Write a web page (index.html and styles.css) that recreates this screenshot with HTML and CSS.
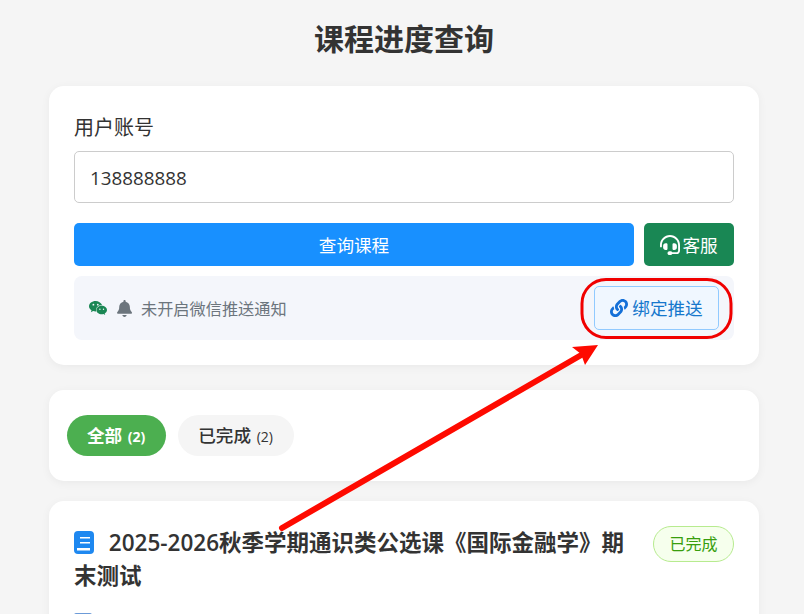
FILE: index.html
```html
<!DOCTYPE html>
<html lang="zh">
<head>
<meta charset="utf-8">
<title>课程进度查询</title>
<link rel="stylesheet" href="styles.css">
</head>
<body>
<main class="page">
  <h1 class="title">课程进度查询</h1>
  <section class="card form-card">
    <label class="label">用户账号</label>
    <div class="input">138888888</div>
    <div class="actions">
      <button class="btn primary">查询课程</button>
      <button class="btn service">
        <svg class="ico" viewBox="0 0 512 512"><path fill="currentColor" d="M256 48C141.100 48 48 141.100 48 256v40c0 13.300-10.700 24-24 24S0 309.300 0 296V256C0 114.600 114.600 0 256 0S512 114.600 512 256V400.100c0 48.600-39.400 88-88.100 88L313.600 488c-8.300 14.300-23.800 24-41.600 24H240c-26.500 0-48-21.500-48-48s21.500-48 48-48h32c17.800 0 33.300 9.700 41.600 24l110.400 .1c22.100 0 40-17.900 40-40V256c0-114.900-93.100-208-208-208zM144 208h16c17.700 0 32 14.300 32 32V352c0 17.700-14.300 32-32 32H144c-35.300 0-64-28.700-64-64V272c0-35.300 28.700-64 64-64zm224 0c35.300 0 64 28.700 64 64v48c0 35.300-28.700 64-64 64H352c-17.700 0-32-14.300-32-32V240c0-17.700 14.300-32 32-32h16z"/></svg>
        客服
      </button>
    </div>
    <div class="notice">
      <div class="notice-text">
        <svg class="wechat" viewBox="0 0 18 16"><path fill="#1a8754" d="M6.600 1C3 1 0 3.300 0 6.200c0 1.700 1 3.100 2.500 4.100L1.900 12.200l2.200-1.100c.8.200 1.600.3 2.500.3h.6c-.1-.4-.2-.9-.2-1.300 0-2.700 2.500-4.800 5.600-4.800h.6C12 2.900 9.500 1 6.600 1z"/><path fill="#1a8754" d="M18 10c0-2.400-2.400-4.300-5.300-4.300S7.400 7.600 7.400 10s2.400 4.300 5.300 4.300c.6 0 1.200-.1 1.800-.3l1.700 1-.5-1.600c1.400-.8 2.300-2 2.300-3.400z"/><circle cx="4.400" cy="4.700" r=".9" fill="#f4f6fb"/><circle cx="8.800" cy="4.700" r=".9" fill="#f4f6fb"/><circle cx="10.900" cy="9.200" r=".7" fill="#f4f6fb"/><circle cx="14.500" cy="9.200" r=".7" fill="#f4f6fb"/></svg>
        <svg class="bell" viewBox="0 0 448 512"><path fill="#6c757d" d="M224 0c-18 0-32 14-32 32v19C119 66 64 131 64 208v19c0 47-17 92-48 127l-7 8c-8 9-10 23-5 34s16 18 29 18h384c13 0 24-7 29-18s3-25-5-34l-7-8c-31-35-48-80-48-127v-19c0-77-55-142-128-157V32c0-18-14-32-32-32zm45 493c12-12 19-28 19-45H160c0 17 7 33 19 45s28 19 45 19 33-7 45-19z"/></svg>
        <span>未开启微信推送通知</span>
      </div>
      <button class="bind">
        <svg class="ico" viewBox="0 0 512 512"><path fill="#1470d8" d="M326.612 185.391c59.747 59.809 58.927 155.698.36 214.590-.11.12-.24.25-.36.37l-67.200 67.200c-59.270 59.270-155.699 59.262-214.960 0-59.270-59.260-59.270-155.700 0-214.960l37.106-37.106c9.840-9.840 26.786-3.300 27.294 10.606.648 17.722 3.826 35.527 9.690 52.721 1.986 5.822.567 12.262-3.783 16.612l-13.087 13.087c-28.026 28.026-28.905 73.660-1.155 101.960 28.024 28.579 74.086 28.749 102.325.51l67.200-67.190c28.191-28.191 28.073-73.757 0-101.830-3.701-3.694-7.429-6.564-10.341-8.569a16.037 16.037 0 0 1-6.947-12.606c-.396-10.567 3.348-21.456 11.698-29.806l21.054-21.055c5.521-5.521 14.182-6.199 20.584-1.731a152.482 152.482 0 0 1 20.522 17.197zM467.547 44.449c-59.261-59.262-155.690-59.270-214.960 0l-67.200 67.200c-.12.120-.25.250-.36.370-58.566 58.892-59.387 154.781.36 214.590a152.454 152.454 0 0 0 20.521 17.196c6.402 4.468 15.064 3.789 20.584-1.731l21.054-21.055c8.350-8.350 12.094-19.239 11.698-29.806a16.037 16.037 0 0 0-6.947-12.606c-2.912-2.005-6.640-4.875-10.341-8.569-28.073-28.073-28.191-73.639 0-101.830l67.200-67.190c28.239-28.239 74.300-28.069 102.325.51 27.750 28.300 26.872 73.934-1.155 101.960l-13.087 13.087c-4.350 4.350-5.769 10.790-3.783 16.612 5.864 17.194 9.042 34.999 9.690 52.721.509 13.906 17.454 20.446 27.294 10.606l37.106-37.106c59.271-59.259 59.271-155.699.001-214.959z"/></svg>
        绑定推送
      </button>
    </div>
  </section>
  <section class="card tabs">
    <button class="tab active">全部 <small>(2)</small></button>
    <button class="tab">已完成 <small>(2)</small></button>
  </section>
  <section class="card course">
    <div class="course-head">
      <h2 class="course-title">
        <svg class="book" viewBox="0 0 20 23"><rect width="20" height="23" rx="4" fill="#1e88f0"/><rect x="6" y="6" width="10" height="1.500" fill="#fff"/><rect x="6" y="11" width="10" height="1.500" fill="#fff"/><rect x="3" y="17" width="13" height="2.500" fill="#fff"/></svg>
        2025-2026秋季学期通识类公选课《国际金融学》期末测试
      </h2>
      <span class="status">已完成</span>
    </div>
    <div class="meta">
      <svg class="meta-ico" viewBox="0 0 16 16"><rect width="16" height="16" rx="2" fill="#6c9bd8"/></svg>
    </div>
  </section>
</main>
<svg class="annotation" viewBox="0 0 804 614" width="804" height="614" aria-hidden="true">
  <rect x="582" y="279.500" width="149" height="58" rx="24" fill="none" stroke="#f00000" stroke-width="3"/>
  <line x1="282" y1="528" x2="583" y2="354" stroke="#fe0a00" stroke-width="6" stroke-linecap="round"/>
  <polygon points="598,345 572,347 581,354 585,365" fill="#fe0a00"/>
</svg>
</body>
</html>
```
FILE: styles.css
```css
* { box-sizing: border-box; }
html, body { margin: 0; height: 100%; overflow: hidden; }
body {
  background: #f5f5f5;
  color: #333;
  font-family: "Open Sans", "Noto Sans CJK SC", sans-serif;
  position: relative;
}
.page { width: 710px; margin-left: 49px; padding-top: 17px; }
.title { margin: 0 0 23px; height: 46px; line-height: 44px; text-align: center; font-size: 30px; font-weight: 700; color: #333; }
.card { background: #fff; border-radius: 15px; box-shadow: 0 2px 10px rgba(0,0,0,.05); }
.form-card { padding: 25px; height: 279px; margin-bottom: 25px; }
.label { display: block; font-size: 20px; line-height: 30px; padding-top: 2px; margin-bottom: 8px; color: #333; }
.input { height: 52px; border: 1px solid #ccc; border-radius: 5px; padding: 1px 15px 0; line-height: 51px; font-size: 18.800px; color: #333; background: #fff; }
.actions { display: flex; gap: 10px; margin-top: 20px; }
.btn { border: 0; height: 43px; border-radius: 5px; color: #fff; font: inherit; font-size: 17.600px; display: flex; align-items: center; justify-content: center; gap: 2px; }
.primary { flex: 1; background: #1890ff; }
.service { width: 90px; background: #198754; }
.ico { width: 18px; height: 18px; flex: none; }
.service .ico { width: 20px; height: 20px; }
.notice { margin-top: 10px; height: 64px; background: #f4f6fb; border-radius: 8px; display: flex; align-items: center; justify-content: space-between; padding: 0 15px; }
.notice-text { display: flex; align-items: center; font-size: 16.200px; color: #6c757d; }
.wechat { width: 18px; height: 16px; margin-right: 10px; }
.bell { width: 15px; height: 17px; margin-right: 9px; }
.bind { height: 44px; width: 125px; border: 1px solid #91caff; border-radius: 5px; padding-bottom: 2px; background: #f0f7ff; color: #1677cc; font: inherit; font-size: 17.600px; display: flex; align-items: center; justify-content: center; gap: 4px; }
.tabs { height: 91px; padding: 0 18px; display: flex; align-items: center; gap: 12px; margin-bottom: 20px; }
.tab { height: 41px; border: 0; border-radius: 21px; padding: 0 21px 2px 20px; background: #f5f5f5; color: #333; font: inherit; font-size: 17.600px; font-weight: 500; }
.tab small { font-size: 14px; margin-left: 1px; }
.tab.active { background: #4caf50; color: #fff; font-weight: 700; }
.course { padding: 25px; height: 300px; }
.course-head { display: flex; justify-content: space-between; align-items: flex-start; gap: 18px; }
.course-title { margin: 0; flex: 1; font-size: 22.500px; line-height: 33px; font-weight: 600; color: #333; }
.book { width: 20px; height: 23px; vertical-align: -3px; margin-right: 9px; }
.status { flex: none; width: 81px; height: 36px; line-height: 34px; text-align: center; font-size: 16px; color: #389e0d; background: #f6ffed; border: 1px solid #b7eb8f; border-radius: 18px; }
.meta { margin-top: 21px; display: flex; align-items: center; }
.meta-ico { width: 18px; height: 18px; }
.annotation { position: absolute; left: 0; top: 0; pointer-events: none; }
```
